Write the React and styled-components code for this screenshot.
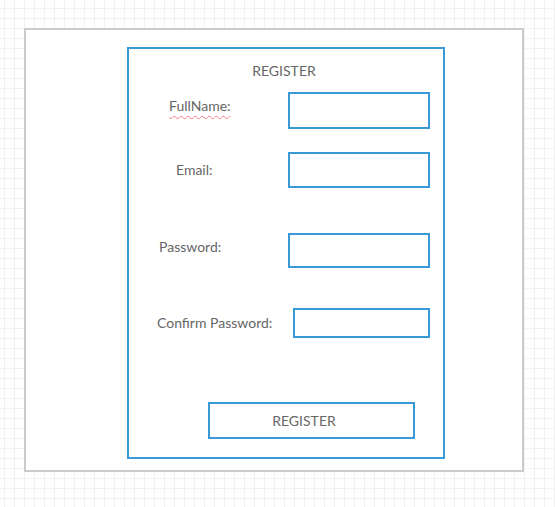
import React from "react";
import styled, { createGlobalStyle } from "styled-components";

const GlobalStyle = createGlobalStyle`
  html, body {
    margin: 0;
    padding: 0;
    width: 555px;
    height: 507px;
    overflow: hidden;
  }
  body {
    font-family: Lato, "Open Sans", sans-serif;
    background-color: #fff;
    background-image:
      linear-gradient(to right, #f1f1f1 1px, transparent 1px),
      linear-gradient(to bottom, #f1f1f1 1px, transparent 1px);
    background-size: 10px 10px;
    background-position: 4px 8px;
  }
  * { box-sizing: border-box; }
`;

const Canvas = styled.div`
  padding: 28px 0 0 24px;
`;

const Frame = styled.div`
  width: 500px;
  height: 444px;
  border: 2px solid #cbcbcb;
  background: #fff;
  padding: 17px 0 0 101px;
`;

const Form = styled.form`
  width: 318px;
  height: 412px;
  border: 2px solid #3a99d8;
  display: flex;
  flex-direction: column;
  margin: 0;
`;

const Title = styled.div`
  margin-top: 14px;
  padding-right: 4px;
  font-size: 14px;
  line-height: 16px;
  color: #666;
  text-align: center;
`;

const Row = styled.div`
  display: flex;
  align-items: center;
  margin-top: ${(p) => p.$gap}px;
  padding-right: 13px;
`;

const Label = styled.label`
  margin-left: ${(p) => p.$left}px;
  margin-bottom: ${(p) => p.$lift || 0}px;
  font-size: 14px;
  line-height: 16px;
  color: #666;
  white-space: nowrap;
  ${(p) =>
    p.$misspelled &&
    `text-decoration: underline wavy #f08080;
     text-decoration-thickness: 1px;
     text-underline-offset: 4px;`}
`;

const Field = styled.input`
  margin-left: auto;
  width: ${(p) => p.$w}px;
  height: ${(p) => p.$h}px;
  border: 2px solid #3a99d8;
  background: #fff;
  outline: none;
  padding: 0 6px;
  font-family: inherit;
  font-size: 14px;
  border-radius: 0;
`;

const Button = styled.button`
  margin-top: 64px;
  margin-left: 79px;
  width: 207px;
  height: 37px;
  border: 2px solid #3a99d8;
  background: #fff;
  color: #666;
  font-family: Lato, "Open Sans", sans-serif;
  font-size: 14px;
  line-height: 16px;
  padding: 0 15px 0 0;
  text-align: center;
  border-radius: 0;
  cursor: pointer;
`;

const fields = [
  { label: "FullName:", left: 40, lift: 10, gap: 13, w: 142, h: 37, misspelled: true },
  { label: "Email:", left: 47, lift: 0, gap: 23, w: 142, h: 36 },
  { label: "Password:", left: 30, lift: 7, gap: 45, w: 142, h: 35, type: "password" },
  { label: "Confirm Password:", left: 28, lift: 1, gap: 40, w: 137, h: 30, type: "password" },
];

export default function App() {
  return (
    <>
      <GlobalStyle />
      <Canvas>
        <Frame>
          <Form onSubmit={(e) => e.preventDefault()}>
            <Title>REGISTER</Title>
            {fields.map((f) => (
              <Row key={f.label} $gap={f.gap}>
                <Label $left={f.left} $lift={f.lift} $misspelled={f.misspelled}>
                  {f.label}
                </Label>
                <Field $w={f.w} $h={f.h} type={f.type || "text"} />
              </Row>
            ))}
            <Button type="submit">REGISTER</Button>
          </Form>
        </Frame>
      </Canvas>
    </>
  );
}
